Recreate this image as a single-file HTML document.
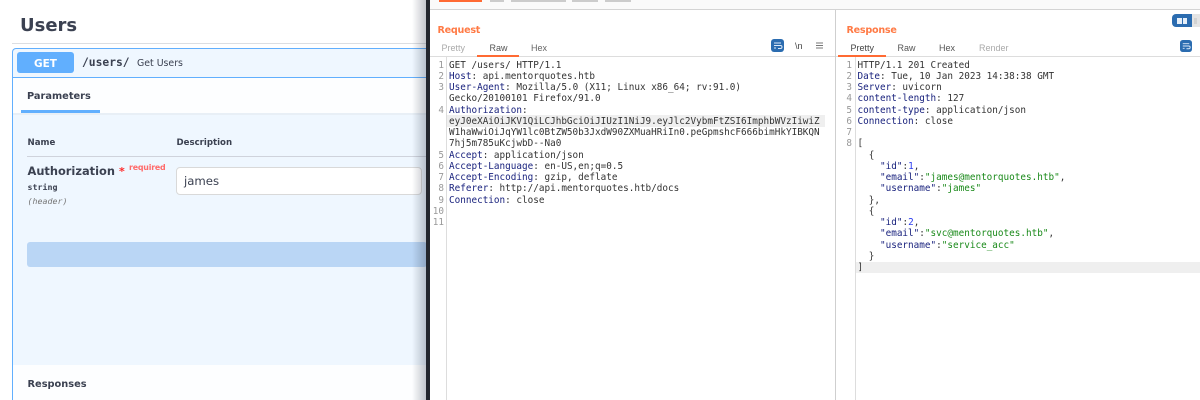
<!DOCTYPE html>
<html><head><meta charset="utf-8"><style>
*{box-sizing:border-box}
html,body{margin:0;padding:0;width:1200px;height:400px;overflow:hidden;background:#fff}
#w{position:relative;width:1200px;height:400px;overflow:hidden;filter:blur(.25px)}
.a{position:absolute;white-space:pre}
.s{font-family:"DejaVu Sans",sans-serif}
.m{font-family:"DejaVu Sans Mono",monospace}
.l{font-family:"DejaVu Sans Mono",monospace;font-size:9.33px;line-height:11.27px;color:#333;position:absolute;white-space:pre}
.n{font-family:"DejaVu Sans Mono",monospace;font-size:9.33px;line-height:11.27px;color:#999;position:absolute;text-align:right;white-space:pre}
.k{color:#1a237e}
.g{color:#1a8a1a}
.b{color:#2a3cf0}
.t{font-family:"Liberation Sans",sans-serif;font-size:9px;color:#555;position:absolute;margin-top:.5px}
.h{font-family:"DejaVu Sans",sans-serif;font-size:9.6px;font-weight:700;color:#ff7a45;position:absolute;letter-spacing:-.25px}
</style></head><body><div id="w">

<!-- left swagger -->
<div class="a s" style="left:20px;top:15px;font-size:18px;font-weight:700;color:#3b4151">Users</div>
<div class="a" style="left:12px;top:43px;width:420px;height:1px;background:#dcdee2"></div>
<div class="a" style="left:12px;top:48px;width:420px;height:352px;background:#eff7ff;border:1px solid #61affe;border-bottom:0;border-radius:4px 0 0 0"></div>
<div class="a" style="left:13px;top:77px;width:419px;height:1px;background:#61affe"></div>
<div class="a s" style="left:17px;top:52px;width:57px;height:21px;background:#61affe;border-radius:3px;color:#fff;font-size:10.5px;font-weight:700;text-align:center;line-height:24px">GET</div>
<div class="a m" style="left:82px;top:56px;font-size:11.3px;font-weight:700;color:#3b4151">/users/</div>
<div class="a s" style="left:137px;top:58px;font-size:9.4px;color:#3b4151">Get Users</div>
<div class="a" style="left:13px;top:78px;width:419px;height:36px;background:#fdfeff"></div>
<div class="a" style="left:13px;top:113px;width:419px;height:2px;background:#e8eff6"></div>
<div class="a s" style="left:27px;top:90.5px;font-size:9.8px;font-weight:700;color:#3b4151">Parameters</div>
<div class="a" style="left:21px;top:109.5px;width:79px;height:3px;background:#61affe"></div>
<div class="a s" style="left:27.5px;top:137.5px;font-size:8.6px;font-weight:700;color:#3b4151">Name</div>
<div class="a s" style="left:176.5px;top:137.5px;font-size:8.6px;font-weight:700;color:#3b4151">Description</div>
<div class="a" style="left:27px;top:156px;width:400px;height:1px;background:#cfd3dc"></div>
<div class="a s" style="left:27.5px;top:163.5px;font-size:11.4px;font-weight:700;color:#3b4151">Authorization</div>
<div class="a s" style="left:119px;top:165px;font-size:11px;color:#ff2a2a;font-weight:700">*</div>
<div class="a s" style="left:129px;top:162.5px;font-size:7.9px;color:#ff6b6b;font-weight:700;letter-spacing:-.2px">required</div>
<div class="a m" style="left:27.5px;top:181.5px;font-size:8.3px;font-weight:700;color:#3b4151">string</div>
<div class="a m" style="left:27.5px;top:195.5px;font-size:8.3px;font-style:italic;color:#777">(header)</div>
<div class="a" style="left:176px;top:167px;width:246px;height:28px;background:#fff;border:1px solid #d9d9d9;border-radius:4px"></div>
<div class="a s" style="left:184px;top:174px;font-size:11.7px;color:#3b4151">james</div>
<div class="a" style="left:27px;top:242px;width:400px;height:25px;background:#bad6f5;border-radius:3px"></div>
<div class="a" style="left:13px;top:365px;width:419px;height:35px;background:#fdfeff"></div>
<div class="a s" style="left:27.5px;top:378.5px;font-size:9.8px;font-weight:700;color:#3b4151">Responses</div>
<div class="a" style="left:412px;top:0;width:14px;height:400px;background:linear-gradient(to right,rgba(40,50,70,0),rgba(40,50,70,.28))"></div>

<!-- dark divider -->
<div class="a" style="left:426px;top:0;width:4px;height:400px;background:#23262d"></div>

<!-- right panel -->
<div class="a" style="left:430px;top:0;width:770px;height:400px;background:#fff"></div>
<div class="a" style="left:430px;top:0;width:770px;height:9px;background:#fafafa"></div>
<div class="a" style="left:430px;top:9px;width:770px;height:1px;background:#d4d4d4"></div>
<div class="a" style="left:439px;top:0;width:43px;height:1.5px;background:#ff6a33"></div>
<div class="a" style="left:490px;top:0;width:14px;height:1.5px;background:#ccc"></div>
<div class="a" style="left:511px;top:0;width:55px;height:1.5px;background:#ccc"></div>
<div class="a" style="left:572px;top:0;width:26px;height:1.5px;background:#ccc"></div>
<div class="a" style="left:605px;top:0;width:26px;height:1.5px;background:#ccc"></div>
<div class="a" style="left:835px;top:10px;width:1px;height:390px;background:#cfcfcf"></div>

<div class="h" style="left:437.5px;top:24.5px">Request</div>
<div class="h" style="left:846.5px;top:24.5px">Response</div>

<div class="t" style="left:441.5px;top:42px;color:#aaa">Pretty</div>
<div class="t" style="left:489.5px;top:42px">Raw</div>
<div class="t" style="left:531px;top:42px;color:#666">Hex</div>
<div class="a" style="left:430px;top:56px;width:405px;height:1px;background:#ddd"></div>
<div class="a" style="left:477px;top:55px;width:42px;height:1.5px;background:#ff6a33"></div>

<div class="t" style="left:850.5px;top:42px;color:#444">Pretty</div>
<div class="t" style="left:897.5px;top:42px">Raw</div>
<div class="t" style="left:939px;top:42px">Hex</div>
<div class="t" style="left:979px;top:42px;color:#aaa">Render</div>
<div class="a" style="left:836px;top:56px;width:364px;height:1px;background:#ddd"></div>
<div class="a" style="left:838px;top:55px;width:48px;height:1.5px;background:#ff6a33"></div>

<!-- icons -->
<svg class="a" style="left:771px;top:39px" width="13" height="13" viewBox="0 0 13 13"><rect width="13" height="13" rx="3" fill="#2b6cb0"/><path d="M3 4h7M3 6.5h6.5a1.5 1.5 0 0 1 0 3H7M3 9h2" stroke="#dbe8f7" stroke-width="1" fill="none"/></svg>
<div class="a" style="left:795px;top:40.5px;font-family:'Liberation Sans',sans-serif;font-size:9px;color:#444">\n</div>
<svg class="a" style="left:816px;top:42px" width="8" height="8" viewBox="0 0 8 8"><path d="M0 1h7M0 3.5h7M0 6h7" stroke="#777" stroke-width="1"/></svg>
<svg class="a" style="left:1180px;top:40px" width="12" height="12" viewBox="0 0 13 13"><rect width="13" height="13" rx="3" fill="#2b6cb0"/><path d="M3 4h7M3 6.5h6.5a1.5 1.5 0 0 1 0 3H7M3 9h2" stroke="#dbe8f7" stroke-width="1" fill="none"/></svg>
<div class="a" style="left:1172px;top:14px;width:20px;height:13px;background:#2b6cb0;border-radius:4px 0 0 4px"></div>
<div class="a" style="left:1192px;top:14px;width:8px;height:13px;background:#e4e4e4"></div>
<div class="a" style="left:1177px;top:17.5px;width:4.5px;height:6px;background:#e6eff9"></div>
<div class="a" style="left:1182.5px;top:17.5px;width:4.5px;height:6px;background:#e6eff9"></div>
<div class="a" style="left:1194px;top:18px;width:3px;height:6px;background:#d2d2d2"></div>

<!-- gutters -->
<div class="a" style="left:446px;top:57px;width:1px;height:343px;background:#ddd"></div>
<div class="a" style="left:855px;top:57px;width:1px;height:343px;background:#ddd"></div>

<!-- highlights -->
<div class="a" style="left:447px;top:115px;width:378px;height:11.5px;background:#efefef"></div>
<div class="a" style="left:856px;top:261.5px;width:344px;height:11.5px;background:#efefef"></div>

<!-- request -->
<div class="n" style="left:430px;top:59.5px;width:14px">1
2
3

4

  
  
5
6
7
8
9
10
11</div>
<div class="l" style="left:449px;top:59.5px">GET /users/ HTTP/1.1
<span class="k">Host</span>: api.mentorquotes.htb
<span class="k">User-Agent</span>: Mozilla/5.0 (X11; Linux x86_64; rv:91.0)
Gecko/20100101 Firefox/91.0
<span class="k">Authorization</span>:
eyJ0eXAiOiJKV1QiLCJhbGciOiJIUzI1NiJ9.eyJlc2VybmFtZSI6ImphbWVzIiwiZ
W1haWwiOiJqYW1lc0BtZW50b3JxdW90ZXMuaHRiIn0.peGpmshcF666bimHkYIBKQN
7hj5m785uKcjwbD--Na0
<span class="k">Accept</span>: application/json
<span class="k">Accept-Language</span>: en-US,en;q=0.5
<span class="k">Accept-Encoding</span>: gzip, deflate
<span class="k">Referer</span>: http://api.mentorquotes.htb/docs
<span class="k">Connection</span>: close</div>

<!-- response -->
<div class="n" style="left:838px;top:59.5px;width:14px">1
2
3
4
5
6
7
8</div>
<div class="l" style="left:857.5px;top:59.5px">HTTP/1.1 201 Created
<span class="k">Date</span>: Tue, 10 Jan 2023 14:38:38 GMT
<span class="k">Server</span>: uvicorn
<span class="k">content-length</span>: 127
<span class="k">content-type</span>: application/json
<span class="k">Connection</span>: close

[
  {
    <span class="k">"id"</span>:<span class="b">1</span>,
    <span class="k">"email"</span>:<span class="g">"james@mentorquotes.htb"</span>,
    <span class="k">"username"</span>:<span class="g">"james"</span>
  },
  {
    <span class="k">"id"</span>:<span class="b">2</span>,
    <span class="k">"email"</span>:<span class="g">"svc@mentorquotes.htb"</span>,
    <span class="k">"username"</span>:<span class="g">"service_acc"</span>
  }
]</div>
</div></body></html>
